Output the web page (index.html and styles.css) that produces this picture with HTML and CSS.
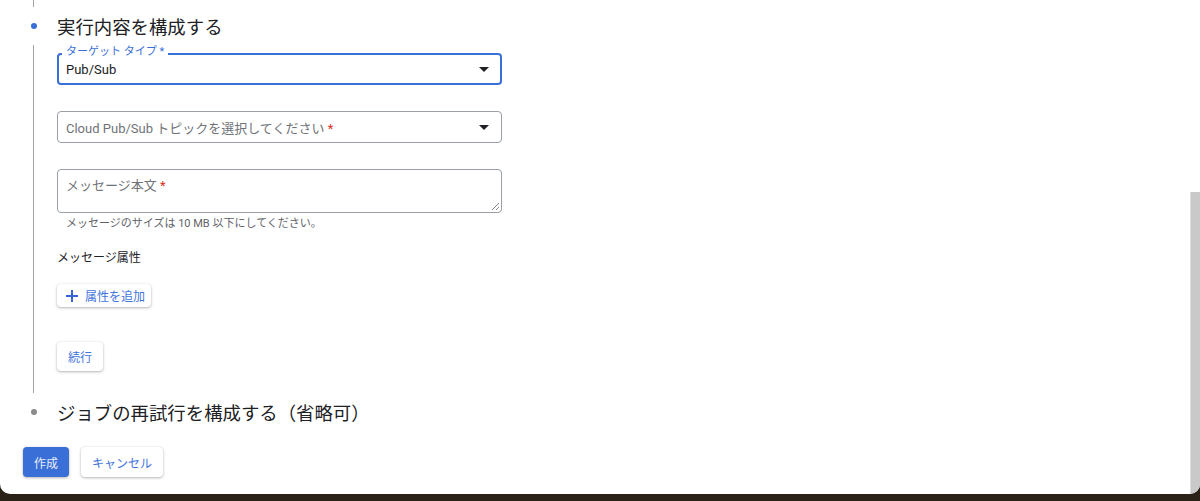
FILE: index.html
```html
<!DOCTYPE html>
<html lang="ja">
<head>
<meta charset="utf-8">
<title>Cloud Scheduler</title>
<link rel="stylesheet" href="styles.css">
</head>
<body>
<div class="card">
  <div class="main">
    <div class="tail"><span class="line"></span></div>

    <div class="step">
      <div class="rail">
        <div class="dot-box"><span class="dot dot-active"></span></div>
        <span class="line grow"></span>
      </div>
      <div class="body body-open">
        <h2 class="step-title">実行内容を構成する</h2>

        <div class="field field-focused">
          <span class="float-label">ターゲット タイプ *</span>
          <span class="value">Pub/Sub</span>
          <svg class="arrow" width="10" height="5" viewBox="0 0 10 5"><polygon points="0,0 10,0 5,5"/></svg>
        </div>

        <div class="field field-gap">
          <span class="placeholder">Cloud Pub/Sub トピックを選択してください <span class="req">*</span></span>
          <svg class="arrow" width="10" height="5" viewBox="0 0 10 5"><polygon points="0,0 10,0 5,5"/></svg>
        </div>

        <div class="textarea field-gap">
          <span class="placeholder">メッセージ本文 <span class="req">*</span></span>
          <svg class="resize" width="7" height="7" viewBox="0 0 7 7"><path d="M7 0L0 7M7 4L4 7" stroke="#8a8a8a" stroke-width="1"/></svg>
        </div>
        <p class="hint">メッセージのサイズは 10 MB 以下にしてください。</p>

        <h3 class="sub-title">メッセージ属性</h3>
        <button class="btn btn-add" type="button">
          <svg width="12" height="12" viewBox="0 0 12 12"><path d="M6 0v12M0 6h12" stroke="#3367d6" stroke-width="2"/></svg>
          <span>属性を追加</span>
        </button>

        <button class="btn btn-continue" type="button">続行</button>
      </div>
    </div>

    <div class="step">
      <div class="rail">
        <div class="dot-box"><span class="dot dot-idle"></span></div>
      </div>
      <div class="body">
        <h2 class="step-title">ジョブの再試行を構成する（省略可）</h2>
      </div>
    </div>

    <div class="actions">
      <button class="btn btn-primary" type="button">作成</button>
      <button class="btn btn-cancel" type="button">キャンセル</button>
    </div>
  </div>
  <div class="scroll-track"><div class="scroll-thumb"></div></div>
</div>
</body>
</html>
```

FILE: styles.css
```css
* { box-sizing: border-box; }

html, body {
  margin: 0;
  padding: 0;
  height: 501px;
  overflow: hidden;
}

body {
  background: #2a2117;
  font-family: "Roboto", "Noto Sans CJK JP", sans-serif;
  color: #202124;
}

.card {
  height: 494px;
  background: #ffffff;
  border-radius: 0 0 10px 10px;
  display: flex;
  overflow: hidden;
}

.main {
  flex: 1;
  padding-left: 23px;
  display: flex;
  flex-direction: column;
}

.tail {
  width: 21px;
  height: 7px;
  display: flex;
  justify-content: center;
}

.line {
  display: block;
  width: 1px;
  background: #a3a3a3;
}

.tail .line { height: 7px; }

.step {
  display: grid;
  grid-template-columns: 21px 1fr;
  column-gap: 13px;
}

.rail {
  display: flex;
  flex-direction: column;
  align-items: center;
}

.dot-box {
  height: 38px;
  display: flex;
  align-items: center;
  justify-content: center;
}

.line.grow {
  flex: 1;
}

.dot {
  display: block;
  width: 6px;
  height: 6px;
  border-radius: 50%;
}

.dot-active { background: #3a6fd8; }
.dot-idle { background: #8a8a8a; }

.body {
  width: 445px;
}

.body-open {
  padding-bottom: 22px;
}

.step-title {
  margin: 0;
  height: 38px;
  padding-top: 3px;
  line-height: 35px;
  font-size: 18.4px;
  font-weight: 400;
  color: #202124;
  white-space: nowrap;
}

.field {
  position: relative;
  height: 32px;
  border: 1px solid #9aa0a6;
  border-radius: 4px;
  display: flex;
  align-items: center;
  padding: 0 12px 0 8px;
  font-size: 13px;
}

.field-focused {
  margin-top: 8px;
  border: 2px solid #3a6fd8;
  padding-left: 7px;
  padding-right: 11px;
}

.field-gap { margin-top: 26px; }

.float-label {
  position: absolute;
  left: 3px;
  top: -10px;
  padding: 0 4px;
  background: #ffffff;
  font-size: 11px;
  line-height: 14px;
  color: #3a6fd8;
}

.value {
  flex: 1;
  color: #202124;
}

.placeholder {
  flex: 1;
  color: #6f7378;
}

.req { color: #d93025; }

.arrow {
  fill: #202124;
  flex: none;
}

.textarea {
  position: relative;
  height: 44px;
  border: 1px solid #9aa0a6;
  border-radius: 4px;
  padding: 8px 8px 0;
  font-size: 13px;
  line-height: 16px;
  display: flex;
}

.resize {
  position: absolute;
  right: 2px;
  bottom: 2px;
}

.hint {
  margin: 4px 0 0 9px;
  font-size: 11px;
  line-height: 14px;
  color: #5f6368;
}

.sub-title {
  margin: 19px 0 0;
  font-size: 12px;
  line-height: 16px;
  font-weight: 400;
  color: #202124;
}

.btn {
  font-family: inherit;
  font-size: 12px;
  border: none;
  border-radius: 4px;
  background: #ffffff;
  color: #3f74dc;
  box-shadow: 0 1px 3px rgba(0, 0, 0, 0.28), 0 0 1px rgba(0, 0, 0, 0.12);
  cursor: pointer;
  padding: 0;
}

.btn-add {
  margin-top: 18px;
  display: flex;
  align-items: center;
  gap: 7px;
  height: 23px;
  width: 94px;
  padding-left: 9px;
}

.btn-add svg { flex: none; }

.btn-continue {
  display: block;
  margin-top: 35px;
  width: 46px;
  height: 29px;
}

.actions {
  display: flex;
  gap: 12px;
  margin-top: 16px;
}

.btn-primary {
  width: 46px;
  height: 30px;
  background: #3a6fd8;
  color: #e8eefb;
}

.btn-cancel {
  width: 82px;
  height: 30px;
}

.scroll-track {
  width: 10px;
  display: flex;
  flex-direction: column;
}

.scroll-thumb {
  margin-top: 192px;
  flex: 1;
  background: #c9c9c9;
  border-left: 1px solid #dedede;
}
```
